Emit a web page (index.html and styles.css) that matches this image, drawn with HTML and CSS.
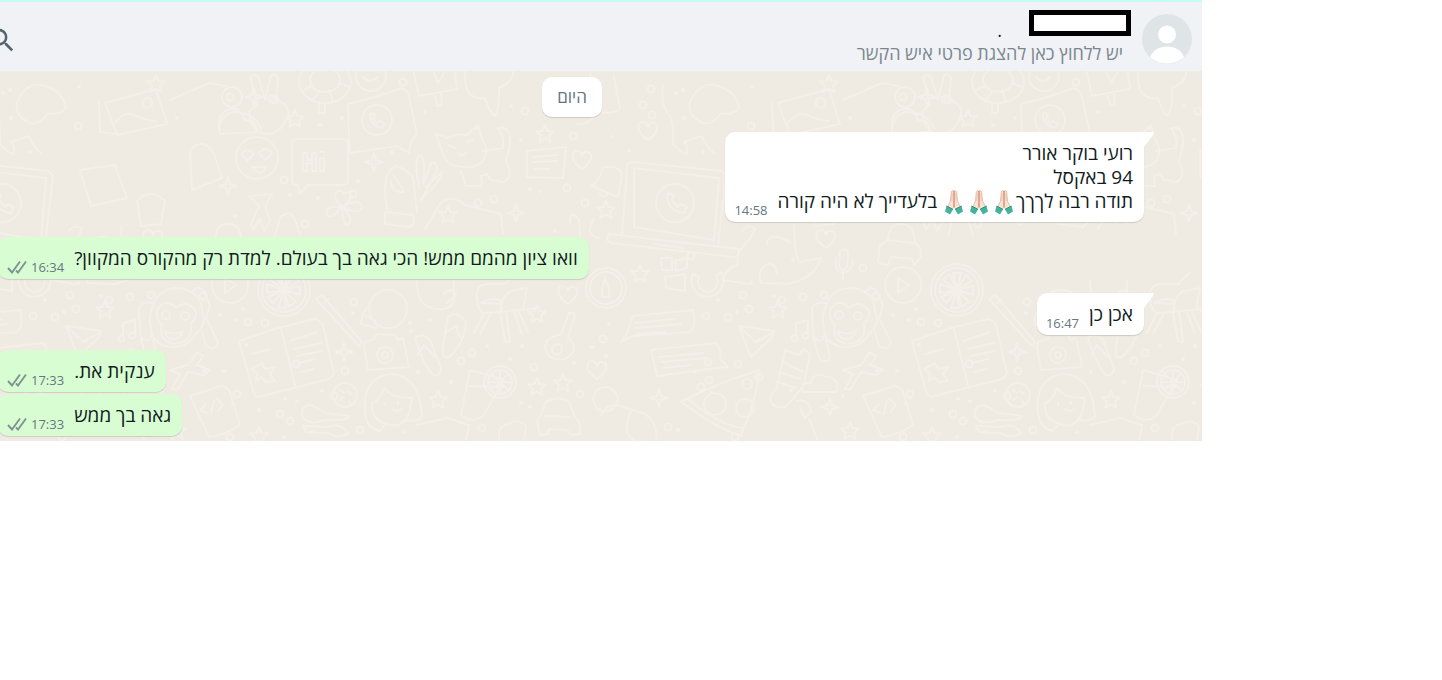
FILE: index.html
```html
<!DOCTYPE html>
<html lang="he" dir="rtl">
<head>
  <meta charset="UTF-8">
  <meta name="viewport" content="width=device-width, initial-scale=1">
  <title>צ'אט</title>
  <link rel="stylesheet" href="styles.css">
</head>
<body>

  <svg class="defs" aria-hidden="true">
    <symbol id="ticks" viewBox="0 0 20 14">
      <path d="M1 8l4 4.500L13 1.500M9 10.500l2 2L19 1.500" fill="none" stroke="#7f9490" stroke-width="1.900"/>
    </symbol>
    <symbol id="pray" viewBox="0 0 18 25">
      <path d="M8.800 1C7.500 0 6.300 1 6.200 3L5.500 11 2.500 17l3 4.500L9 17l3.500 4.500 3-4.500-3-6-.7-8C11.700 1 10.500 0 9.200 1z" fill="#fbe3d3" stroke="#e2b39c" stroke-width=".8"/>
      <path d="M9 1v16" fill="none" stroke="#b9705c" stroke-width="1"/>
      <path d="M7.200 3.500L6.800 11M10.800 3.500l.4 7.500" fill="none" stroke="#e8b8a2" stroke-width=".7"/>
      <path d="M1.500 16L0 21.500 5 24.500l3-5L5.500 18zM16.500 16l1.500 5.500-5 3-3-5 2.500-1.500z" fill="#45b39c"/>
      <path d="M1.500 16l4 2 2.500 1.500M16.500 16l-4 2-2.500 1.500" fill="none" stroke="#2c8f7e"/>
    </symbol>
  </svg>

  <main class="chat">
    <header class="chat-header">
      <svg class="avatar" viewBox="0 0 50 50" role="img" aria-label="תמונת פרופיל">
        <circle cx="25" cy="25" r="25" fill="#dfe5e7"/>
        <circle cx="25" cy="20.500" r="9" fill="#fff"/>
        <path d="M8 43c3-7 9-10.500 17-10.500S39 36 42 43c-4.500 4-10 6.500-17 6.500S12.500 47 8 43z" fill="#fff"/>
      </svg>
      <div class="contact">
        <div class="contact-name">
          <span class="name-box"></span>
          <span>.</span>
        </div>
        <div class="contact-info">יש ללחוץ כאן להצגת פרטי איש הקשר</div>
      </div>
      <button class="search" type="button" aria-label="חיפוש">
        <svg viewBox="0 0 24 24">
          <path d="M15.900 14.300H15l-.3-.3c1-1.100 1.600-2.700 1.600-4.300 0-3.700-3-6.700-6.700-6.700S3 6 3 9.700s3 6.700 6.700 6.700c1.600 0 3.200-.6 4.300-1.600l.3.300v.8l5.100 5.100 1.500-1.500zM9.700 14.300c-2.600 0-4.600-2-4.600-4.600s2-4.600 4.600-4.600 4.600 2 4.600 4.600-2.100 4.600-4.600 4.600z" fill="#54656f"/>
        </svg>
      </button>
    </header>

    <section class="messages">
      <svg class="wallpaper" aria-hidden="true">
        <defs>
          <marker id="ring" markerWidth="10" markerHeight="10" refX="5" refY="5" markerUnits="userSpaceOnUse">
            <circle cx="5" cy="5" r="3.500" fill="none" stroke="#f4efe8" stroke-width="2"/>
          </marker>
          <marker id="dot" markerWidth="6" markerHeight="6" refX="3" refY="3" markerUnits="userSpaceOnUse">
            <circle cx="3" cy="3" r="2" fill="#f4efe8"/>
          </marker>
          <path id="star" d="M0-9L2.600-3 9-2.500 4 1.800 5.600 8 0 4.500-5.600 8-4 1.800-9-2.500-2.600-3z"/>
          <path id="spark" d="M0-9l2 7 7 2-7 2-2 7-2-7-7-2 7-2z"/>
          <path id="heart" d="M0 9C-13 0-11-9-5-9-2-9 0-6 0-4 0-6 3-9 6-8 12-6 10 2 0 9z"/>
          <path id="cloud" d="M-17 9c-3-7 3-10 8-9 1-8 10-11 15-6 9-1 13 8 10 15z"/>
          <g id="doodles" transform="translate(0 -71)">
            <!-- top row -->
            <path d="M-10 85q-3 22 8 32 3 12 2 27 6 8 14 10 1-10-3-12l18-6q5 12 13 18M21 95q8-14 25-9 18 7 20 22-6 8-18 5-9 14-20 9-14-7-11-20z"/>
            <path d="M170 100l39-17 17 3M99 102l1 30 14 2M105 103l51-14 11 35-50 11zM114 124q10-14 20-9t22 6M147 98a5 5 0 1 0 1 0"/>
            <path d="M181 105l-7-28q6-5 9 2l6 21 6-25q5-2 7 3l-2 22q14 4 12 16-7 19-24 18-14-4-15-23z" transform="translate(76 0)"/>
            <circle cx="232" cy="97" r="10"/><path d="M219 130q2-17 15-18 22 1 27 17"/>
            <ellipse cx="325" cy="82" rx="26" ry="21"/><ellipse cx="325" cy="80" rx="15" ry="12"/>
            <path d="M302 91l11-6M312 101l8-10M333 101l-4-11M350 87l-11-4M319 102v11h6v-10"/>
            <circle cx="371" cy="76" r="15"/><path d="M363 77q7 8 14 0"/>
            <path d="M348 104q30-7 53-16 7 2 8 9l8 37-6 7-2 12-12-7-47 7-1-14z"/>
            <circle cx="377" cy="120" r="15"/><path d="M370 113q-1 11 12 15l3-4-5-3-3 2-4-5 2-4z"/>
            <path d="M413 69l6 27 38-7-3-23M434 73l4 10 6-10M435 96l2 10 5-1-1-11M465 71q-2 30 20 27 5 16 10 18 5-10 4-28 15-6 14-17"/>
            <path d="M590 72l6 42q-8 12-20 10M614 77l6 32q-6 5-20 3"/>
            <!-- second row -->
            <circle cx="257" cy="158" r="21"/><path d="M242 154q5-8 12 0l-7 7zM259 153q6-8 13 0l-7 7zM252 167h14q-5 11-14 0z"/>
            <path d="M296 139h47q5 0 5 5v36q0 5-5 5h-35l-8 9-2-9q-6 0-6-5v-36q0-5 4-5zM303 153v18h4v-8h5v8h4v-18h-4v7h-5v-7zM320 158h4v13h-4zM320 152h4"/>
            <path d="M436 134l12 4q8-5 19-3l11-10 4 14q8 12 1 22-7 8-21 6-17-1-20-16zM483 151l20-3q2-10-5-20 13-3 12 16l-4 18q8 13-2 20l-13-2-4-6-6 2 1 10h-16l-5-15M449 145l6 3M466 142l7-2M458 153q4 5 9-1"/>
            <path d="M385 212l28 3 1 8-4 4-25-3zM388 212q-9-38 8-46 12 4 17 12l4 34M393 174q9 13 11 18-13 1-13-12M419 188q-5-27 0-33 8 2 4 29l9-22q8 2 3 12l-14 27M426 187l16-15q-1 10-21 27"/>
            <path d="M527 151l39-4-3 31-36-1zM533 157l24-2M533 162l24-1M534 169h15"/>
            <path d="M591 186q8-4 12-18 13-4 19 5l-4 24zM600 193q3 7 8 1"/>
            <path d="M240 133l-20 1q-4-19 7-24 13-5 18 10 13-1 11 12z"/>
            <path d="M342 207q-13-14-3-16 3-1 4 3 7-5 8 2-1 5-9 11 17-9 20-1-1 10-20 1 14 13 5 18-5-1-5-19-9 14-15 9-3-10 15-8zM249 196l23-2-7 12 5 15-6 10-4-12-7 11-2-6 8-18z"/>
            <path d="M425 229l15-25q11-11 25 1l36 9 2 20M570 224v-8q5-3 9 4l1 16M594 219q-10 16 5 19"/>
            <path d="M275 236l5-18q10-10 15 2l5 15M80 170l35-5 12 33-36 8zM190 150q14-14 24 4l8 24-30 12zM137 201q12-14 28 0l-4 23-20 2z"/>
            <!-- laptop -->
            <path d="M627 167q0-5 5-5l90 9 4 5-8 70M634 168l85 10-5 62-80-13zM627 169l-5 67M609 234l129 15q2 8-4 8l-123-14q-6-2-2-9zM653 244l30 4"/>
            <circle cx="675" cy="203" r="19"/><path d="M668 193q-3 17 16 20l3-6-6-3-3 3-6-7 2-5z"/>
            <!-- third row -->
            <path d="M69 231q6-8 13-2l-5 10q-8 7-12 15l-1 11q-12 4-14 15l25 4M94 244q0-9 12-7l11 5M121 226q1 30 5 36l22-4q-6 20-33 26l-27-1q-5-12 7-19 8-1 9 10"/>
            <path d="M205 261l2-16 7-4 4-13q11-9 21 1l4 15q6 4 5 13l-7 8-2-6-21-2-3 8-7-1zM215 240l25 3"/>
            <path d="M167 251q6-4 8 1l-1 15q-5 6-8-1zM163 258q-2 16 8 14 8 0 9-12M170 273v6"/>
            <path d="M-18 261h11v12h-10zM-4 264l12-3v10l-11 3zM-14 280l20-3v17l-19-3z" transform="translate(6 -3)"/>
            <path d="M20 274a16 16 0 1 0 28-2l-5 4a10 10 0 1 1-17 1z"/>
            <circle cx="-67" cy="288" r="20"/><circle cx="-67" cy="288" r="16"/><path d="M-71 297v-8l3-11 4 10v9z"/>
            <circle cx="230" cy="285" r="18"/><path d="M225 278v15l11-8z"/>
            <circle cx="284" cy="290" r="26"/><circle cx="284" cy="290" r="22"/>
            <path d="M284 290l-4-17h8zM284 290l9-15 6 6zM284 290l16-4v9zM284 290l12 12-7 5zM284 290l2 18h-8zM284 290l-11 13-5-6zM284 290l-17 3v-9zM284 290l-14-10 6-6z"/>
            <!-- monkey -->
            <path d="M153 306q5-18 26-18 22 3 23 23 6 11-5 22-12 18-32 13-14-5-14-18-3-13 2-22zM158 308q9-10 18 0 10-9 19 2 4 7-4 13 3 19-16 21-17-2-13-19-8-8-4-17zM165 331q10 5 18 0-3 9-12 8-6-2-6-8"/>
            <circle cx="166" cy="315" r="4"/><circle cx="185" cy="316" r="4"/>
            <path d="M152 303q-14-2-13 10l2 24q7 8 10-1M141 339l5 19q5 7 11 0l-4-18M193 291q5-6 11 0l6 15-4 12 12 24q-2 10-12 4l-4-14"/>
            <path d="M-40 316l60-6q4 16-3 22l-58 4-11 6 6-9zM-38 323l40-4M-38 328l46-4M-36 334l28-2M-22 350l65-7q6 7 4 16l8 8-12 1-59 8zM-14 357l44-4M-12 362l46-4M-10 368l28-3"/>
            <path d="M66 326l35 5-2 6-21 20zM66 326l17 16 16-9"/><path d="M123 323v13M123 323l12-3v13M123 336a3 3 0 1 0 1 1M134 333a3 3 0 1 0 1 1"/>
            <path d="M239 341l39-13 37-9q6 2 8 6l11 49-5 5-71 18-4-3zM281 329l14 56M252 354l18-5M290 341l27-9M295 349l26-6M297 356l25-5M299 363l16-4M301 372l13-3M262 363l3 6 10-2-5 7 5 7-9 1-5-5-5 4 1-8-6-4z"/>
            <path d="M316 299l6-4 40 47-3 4zM324 303l5-4"/>
            <circle cx="388" cy="309" r="19"/><path d="M370 306q-8 4-9 18l15 4 5-4M366 316l9 5M417 281q0 24 15 27 20 5 22-10v-18M444 294q7-8 12 1l-9 8"/>
            <path d="M477 298q-2-13 10-14h18l12-12M477 298q1 14 8 15l54-5M501 310q0-18 15-20l11-2-4 22M484 313l-10 20M491 313l-11 21M500 313l5 28q4 2 5 0l-4-30M514 312l8 22M518 310l10 22M481 303q17-9 21 1z"/>
            <path d="M569 313q5-2 6 3l-7 21q8 8 5 15-8 13-24 4-8-11 1-18l11-4z"/><circle cx="557" cy="349" r="5"/>
            <!-- fourth row -->
            <path d="M365 342l9-3 3-5 18 1 3 5 5-2 6 29-41 3-4-24z"/><circle cx="385" cy="355" r="8"/><circle cx="385" cy="355" r="3"/>
            <path d="M415 338q7-6 15 2l11 28q0 9-8 7-8-7-18-37zM418 355l6-10 11 12M448 317q10-8 18 6-1 19-17 34-8 3-6-11zM445 333l11-7 4 11"/>
            <path d="M365 400q3-25 28-26 27 4 29 42-3 6-17 4-6 8-16 5-4-2-9 6-18-3-15-31zM384 388q8 11 28 10-3 29-20 27-22-3-20-22 8-2 12-15zM392 409q5 4 10 0M385 403v2M398 402v2"/>
            <path d="M470 370l34 10-21 36q-10 8-22-1zM470 386l35 1"/><circle cx="500" cy="382" r="16"/><circle cx="500" cy="382" r="12"/>
            <path d="M493 375l14 14M507 375l-14 14M500 372v20M490 382h20"/>
            <circle cx="345" cy="395" r="12"/><path d="M340 390l4 3M347 391l4 3M340 400l4-3M349 401l2 3"/>
            <path d="M302 410q5-8 13-3l10 6 24 3q0 5-25 4-14 6-22-3zM303 426l25 1q13-5 20 6-9 7-20 0l-22-1z"/>
            <path d="M112 350l14 5 5-6 6 5-6 30q-10 15-19 23-17 2-14-13l6-6zM110 362l20 10M106 372l21 7M104 382l19 6"/>
            <path d="M8 402q31-17 79-32-7 43-19 63M8 402q40 29 61 34M15 399q31 26 54 29"/><circle cx="42" cy="404" r="11"/><circle cx="72" cy="408" r="9"/><circle cx="74" cy="384" r="5"/>
            <path d="M190 396l31-10q7 1 9 6l10 33q-15 10-31 12zM206 404l-6 6 7 3M217 399l6 6-5 6M214 400l-3 14"/>
            <path d="M170 370l18-5 9-13 6 4-6 9 13 5-6 5-16-3-11 18-5-1 8-15z"/>
            <path d="M124 401q12-3 14 11l-6 6-5-10M136 419l8 20M-72 416q6-14 20-10l24 8q14 10 11 27M-42 411q-10 22 4 30"/>
            <path d="M540 435l-3-14 4-6 5-13q14-7 23 0l6 15q6 5 5 17l-9 1-4-5-18-1-1 5zM546 416l24 1"/>
            <path d="M417 425l30-7 22 7-3 16M500 441q-4-15 8-17 10-6 18 2l-2 15M593 400q2-14 15-13 13 6 9 18-9 10-20 4z"/>
            <use href="#cloud" x="147" y="383"/>
            <g><use href="#star" x="295" y="119"/><use href="#star" x="156" y="84"/><use href="#star" x="545" y="134"/><use href="#star" x="448" y="215"/><use href="#star" x="606" y="210"/>
            <use href="#star" x="105" y="310"/><use href="#star" x="-33" y="274"/><use href="#star" x="537" y="314"/><use href="#star" x="537" y="387"/><use href="#star" x="438" y="400"/><use href="#star" x="563" y="383"/><use href="#star" x="259" y="436"/><use href="#star" x="177" y="431"/></g>
            <g><use href="#spark" x="254" y="97"/><use href="#spark" x="374" y="162"/><use href="#spark" x="516" y="213"/><use href="#spark" x="228" y="186"/><use href="#spark" x="344" y="352"/><use href="#spark" x="157" y="407"/><use href="#spark" x="-14" y="398"/></g>
            <g><use href="#heart" x="582" y="160"/><use href="#heart" x="648" y="131"/><use href="#heart" x="153" y="239"/><use href="#heart" x="568" y="295"/><use href="#heart" x="597" y="370"/></g>
            <g class="rings">
              <polyline points="230,97 272,99 403,82 525,111 573,136 284,180 353,194 478,203 494,199 585,203 305,224 567,188 643,105 652,115 651,89 78,126 275,100 18,256 109,300 130,297 151,295 190,268 33,316 76,309 55,317 203,296 265,323 248,322 354,302 472,353 461,361 345,371 534,367 603,339 35,362 65,364 296,364 237,394 28,387 62,437 334,396 280,414 290,421 580,394 482,428 360,430 36,380 86,377 230,437 70,295 -5,427"/>
            </g>
            <g class="dots">
              <polyline points="320,125 342,118 425,112 476,128 511,106 521,140 392,152 358,181 318,198 290,195 530,189 540,191 555,231 235,216 612,137 629,151 676,93 684,118 79,87 10,90 177,118 30,152 45,300 64,312 101,296 120,260 78,283 236,320 243,309 220,315 353,313 410,323 411,331 430,320 418,372 451,382 487,346 510,359 522,346 574,363 592,347 609,324 606,356 297,401 322,391 285,399 521,403 530,407 404,432 284,437 5,430 204,371 224,371 246,345 86,340 22,372 38,393 118,390 170,396 233,404 259,410 312,432"/>
            </g>
          </g>
        </defs>
        <use href="#doodles" x="-673"/>
        <use href="#doodles"/>
        <use href="#doodles" x="673"/>
      </svg>

      <div class="day">היום</div>

      <article class="message in tail">
        <p>רועי בוקר אורר<br>94 באקסל<br>תודה רבה לךךך<span class="emoji" role="img" aria-label="תודה"><svg><use href="#pray"/></svg><svg><use href="#pray"/></svg><svg><use href="#pray"/></svg></span> בלעדייך לא היה קורה</p>
        <div class="meta"><time>14:58</time></div>
      </article>

      <article class="message out">
        <p>וואו ציון מהמם ממש! הכי גאה בך בעולם. למדת רק מהקורס המקוון?</p>
        <div class="meta"><time>16:34</time><svg><use href="#ticks"/></svg></div>
      </article>

      <article class="message in tail">
        <p>אכן כן</p>
        <div class="meta"><time>16:47</time></div>
      </article>

      <article class="message out grouped">
        <p>ענקית את.</p>
        <div class="meta"><time>17:33</time><svg><use href="#ticks"/></svg></div>
      </article>

      <article class="message out">
        <p>גאה בך ממש</p>
        <div class="meta"><time>17:33</time><svg><use href="#ticks"/></svg></div>
      </article>
    </section>
  </main>

</body>
</html>
```
FILE: styles.css
```css
* {
  box-sizing: border-box;
}

body {
  margin: 0;
  background: #fff;
  color: #111b21;
  font-family: "Open Sans", "Noto Sans", sans-serif;
}

.defs {
  display: none;
}

.chat {
  max-width: 1202px;
  margin-right: auto;
  overflow: hidden;
}

.chat-header {
  display: flex;
  align-items: flex-start;
  padding: 8px 10px 6px;
  background: #f0f2f5;
  border-top: 2px solid #c4fdf6;
}

.avatar {
  width: 50px;
  height: 50px;
  margin-top: 4px;
}

.contact {
  flex: 1;
  padding-right: 11px;
}

.contact-name {
  display: flex;
  align-items: flex-end;
  gap: 27px;
  height: 32px;
  line-height: 24px;
  font-size: 18px;
}

.name-box {
  align-self: flex-start;
  width: 102px;
  height: 26px;
  background: #fff;
  border: 5px solid #000;
}

.contact-info {
  padding-right: 8px;
  font-size: 18px;
  line-height: 23px;
  color: #7b8790;
}

.search {
  margin: 15px 0 0 -23px;
  padding: 0;
  border: 0;
  background: none;
  cursor: pointer;
}

.search svg {
  display: block;
  width: 30px;
  height: 30px;
}

.messages {
  position: relative;
  display: flex;
  flex-direction: column;
  padding: 6px 58px 5px 0;
  background: #efeae2;
}

.wallpaper {
  position: absolute;
  inset: 0;
  width: 100%;
  height: 100%;
}

#doodles {
  fill: none;
  stroke: #f4efe8;
  stroke-width: 2;
  stroke-linejoin: round;
  stroke-linecap: round;
}

.rings polyline,
.dots polyline {
  stroke: none;
}

.rings polyline {
  marker: url(#ring);
}

.dots polyline {
  marker: url(#dot);
}

.day,
.message {
  position: relative;
  background: #fff;
  border-radius: 10px;
  box-shadow: 0 1px 1px rgba(11, 20, 26, 0.15);
}

.day {
  align-self: center;
  margin-bottom: 15px;
  padding: 8px 15px;
  font-size: 17px;
  line-height: 24px;
  color: #64737c;
}

.message {
  display: flex;
  align-items: flex-end;
  gap: 10px;
  padding: 9px 11px 9px 9px;
}

.message p {
  margin: 0;
  font-size: 19px;
  line-height: 24px;
}

.in {
  align-self: flex-start;
  margin-bottom: 15px;
}

.out {
  align-self: flex-end;
  margin-bottom: 14px;
  margin-left: -2px;
  background: #d9fdd3;
}

.grouped {
  margin-bottom: 2px;
}

.message:last-child {
  margin-bottom: 0;
}

.tail {
  border-top-right-radius: 0;
}

.tail::after {
  content: "";
  position: absolute;
  top: 0;
  right: -10px;
  width: 10px;
  height: 15px;
  background: #fff;
  clip-path: polygon(0 0, 100% 0, 90% 20%, 0 100%);
}

.meta {
  display: flex;
  align-items: center;
  gap: 4px;
  margin-bottom: -6px;
  font-size: 13px;
  line-height: 18px;
  color: #667781;
}

.meta svg {
  width: 20px;
  height: 14px;
}

.emoji {
  display: inline-flex;
  align-items: center;
  gap: 7px;
  padding: 0 3px;
  height: 18px;
  vertical-align: middle;
}

.emoji svg {
  width: 18px;
  height: 25px;
}
```
